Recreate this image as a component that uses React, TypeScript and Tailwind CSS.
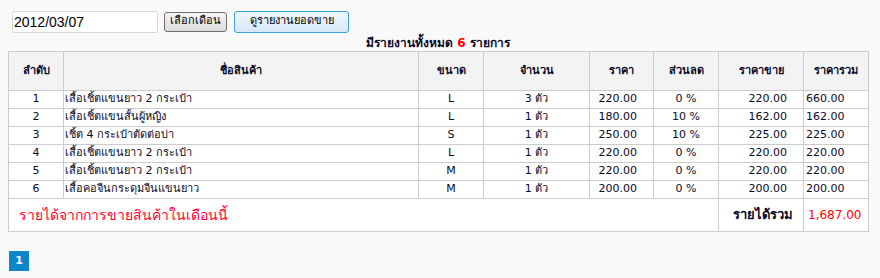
const rows = [
  { no: 1, name: "เสื้อเชิ้ตแขนยาว 2 กระเป๋า", size: "L", qty: "3 ตัว", price: "220.00", disc: "0 %", sale: "220.00", total: "660.00" },
  { no: 2, name: "เสื้อเชิ้ตแขนสั้นผู้หญิง", size: "L", qty: "1 ตัว", price: "180.00", disc: "10 %", sale: "162.00", total: "162.00" },
  { no: 3, name: "เชิ้ต 4 กระเป๋าตัดต่อบ่า", size: "S", qty: "1 ตัว", price: "250.00", disc: "10 %", sale: "225.00", total: "225.00" },
  { no: 4, name: "เสื้อเชิ้ตแขนยาว 2 กระเป๋า", size: "L", qty: "1 ตัว", price: "220.00", disc: "0 %", sale: "220.00", total: "220.00" },
  { no: 5, name: "เสื้อเชิ้ตแขนยาว 2 กระเป๋า", size: "M", qty: "1 ตัว", price: "220.00", disc: "0 %", sale: "220.00", total: "220.00" },
  { no: 6, name: "เสื้อคอจีนกระดุมจีนแขนยาว", size: "M", qty: "1 ตัว", price: "200.00", disc: "0 %", sale: "200.00", total: "200.00" },
];

const th = "border border-[#cccccc] font-bold text-center";
const td = "border border-[#cccccc] h-[18px] p-0";

export default function App() {
  return (
    <div className="w-[880px] h-[278px] bg-[#f9f9f9] text-[#0a0a28] font-['Tahoma','DejaVu_Sans','Noto_Sans',sans-serif] text-[11px]">
      {/* search bar */}
      <div className="flex items-center pt-[10px] pl-[12px] h-[33px]">
        <input
          defaultValue="2012/03/07"
          className="w-[146px] h-[22px] bg-white border border-[#d8d8d8] rounded-[2px] px-[1px] text-[14px] text-black font-['Liberation_Sans',sans-serif] outline-none"
        />
        <button className="ml-[6px] w-[63px] h-[20px] bg-gradient-to-b from-[#f4f4f4] to-[#dcdcdc] border border-[#707070] rounded-[3px] text-[11px] text-black">
          เลือกเดือน
        </button>
        <button className="ml-[7px] w-[115px] h-[22px] bg-gradient-to-b from-[#f0f7fc] to-[#d6e8f5] border border-[#3c9fd6] rounded-[3px] text-[11px] text-black">
          ดูรายงานยอดขาย
        </button>
      </div>

      <div className="w-[860px] ml-[8px] h-[18px] pt-[3px] text-center font-bold text-[12px] leading-[15px]">
        มีรายงานทั้งหมด <span className="text-[#ff0000]">6</span> รายการ
      </div>

      <table className="ml-[8px] w-[860px] table-fixed border-collapse bg-white">
        <colgroup>
          <col className="w-[55px]" />
          <col className="w-[355px]" />
          <col className="w-[65px]" />
          <col className="w-[106px]" />
          <col className="w-[64px]" />
          <col className="w-[65px]" />
          <col className="w-[85px]" />
          <col className="w-[65px]" />
        </colgroup>
        <thead>
          <tr className="h-[39px] bg-[#f3f3f3]">
            <th className={th}>ลำดับ</th>
            <th className={th}>ชื่อสินค้า</th>
            <th className={th}>ขนาด</th>
            <th className={th}>จำนวน</th>
            <th className={th}>ราคา</th>
            <th className={th}>ส่วนลด</th>
            <th className={th}>ราคาขาย</th>
            <th className={th}>ราคารวม</th>
          </tr>
        </thead>
        <tbody>
          {rows.map((r) => (
            <tr key={r.no}>
              <td className={`${td} text-center`}>{r.no}</td>
              <td className={`${td} pl-[1px]`}>{r.name}</td>
              <td className={`${td} text-center`}>{r.size}</td>
              <td className={`${td} text-center`}>{r.qty}</td>
              <td className={`${td} text-right pr-[16px]`}>{r.price}</td>
              <td className={`${td} text-center`}>{r.disc}</td>
              <td className={`${td} text-right pr-[16px]`}>{r.sale}</td>
              <td className={`${td} pl-[2px]`}>{r.total}</td>
            </tr>
          ))}
          <tr className="h-[33px]">
            <td colSpan={6} className="border border-[#cccccc] pl-[10px] text-[14px] text-[#ff0033]">
              รายได้จากการขายสินค้าในเดือนนี้
            </td>
            <td className="border border-[#cccccc] text-right pr-[10px] font-bold text-[13px]">รายได้รวม</td>
            <td className="border border-[#cccccc] pl-[4px] text-[12px] text-[#ff0000]">1,687.00</td>
          </tr>
        </tbody>
      </table>

      <div className="mt-[19px] ml-[9px] w-[20px] h-[20px] bg-[#0d87c9] text-white font-bold text-[11px] flex items-center justify-center">
        1
      </div>
    </div>
  );
}
